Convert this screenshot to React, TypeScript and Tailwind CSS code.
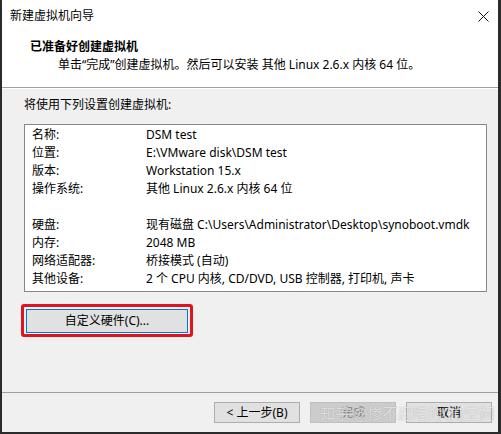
import React from "react";

const font = {
  fontFamily: '"Noto Sans", "Noto Sans CJK SC", sans-serif',
};

const rows: [string, string][] = [
  ["名称:", "DSM test"],
  ["位置:", "E:\\VMware disk\\DSM test"],
  ["版本:", "Workstation 15.x"],
  ["操作系统:", "其他 Linux 2.6.x 内核 64 位"],
  ["", ""],
  ["硬盘:", "现有磁盘 C:\\Users\\Administrator\\Desktop\\synoboot.vmdk"],
  ["内存:", "2048 MB"],
  ["网络适配器:", "桥接模式 (自动)"],
  ["其他设备:", "2 个 CPU 内核, CD/DVD, USB 控制器, 打印机, 声卡"],
];

function WinButton({ children, disabled }: { children: React.ReactNode; disabled?: boolean }) {
  return (
    <div
      className={
        "flex h-[21px] w-[86px] items-center justify-center border text-[12px] " +
        (disabled
          ? "border-[#bfbfbf] bg-[#cccccc] text-[#838383]"
          : "border-[#adadad] bg-[#e1e1e1] text-[#000]")
      }
    >
      {children}
    </div>
  );
}

export default function App() {
  return (
    <div
      className="relative flex h-[434px] w-[501px] flex-col border-b-[2px] border-l-[2px] border-r-[3px] border-[#2b2b2b] bg-[#f0f0f0] text-[12px] text-black"
      style={font}
    >
      {/* title bar + header */}
      <div className="flex flex-col bg-white">
        <div className="flex h-[32px] items-center justify-between pl-[8px] pr-[9px]">
          <span className="text-[12px] leading-none">新建虚拟机向导</span>
          <svg width="11" height="11" viewBox="0 0 11 11">
            <path d="M0.5 0.5L10.5 10.5M10.5 0.5L0.5 10.5" stroke="#111" strokeWidth="1" />
          </svg>
        </div>
        <div className="flex h-[55px] flex-col pl-[28px] pt-[6px]">
          <div className="h-[18px] text-[12px] font-bold leading-[18px]">已准备好创建虚拟机</div>
          <div className="h-[18px] pl-[28px] text-[12px] leading-[18px]">
            单击“完成”创建虚拟机。然后可以安装 其他 Linux 2.6.x 内核 64 位。
          </div>
        </div>
      </div>
      <div className="h-px bg-[#a0a0a0]" />
      <div className="h-px bg-white" />

      {/* body */}
      <div className="flex flex-1 flex-col px-[22px]">
        <div className="mt-[7px] h-[18px] leading-[18px]">将使用下列设置创建虚拟机:</div>
        <div className="mt-[10px] flex h-[168px] w-[463px] flex-col border border-[#828790] bg-white pl-[7px] pt-[1px]">
          {rows.map(([k, v], i) => (
            <div key={i} className="flex h-[18px] items-center leading-[18px]">
              <span className="w-[114px] shrink-0">{k}</span>
              <span className="whitespace-nowrap">{v}</span>
            </div>
          ))}
        </div>
        <div className="-ml-[3px] mt-[12px] flex h-[33px] w-[172px] items-center justify-center rounded-[3px] border-[3px] border-[#e0141e]">
          <div className="flex h-[24px] w-[162px] items-center justify-center border border-[#0078d7] bg-[#e1e1e1] text-[12px]">
            自定义硬件(C)...
          </div>
        </div>
      </div>

      {/* footer */}
      <div className="h-px bg-[#a0a0a0]" />
      <div className="flex h-[39px] items-start justify-end gap-[10px] pr-[6px] pt-[9px]">
        <WinButton>&lt; 上一步(B)</WinButton>
        <WinButton disabled>完成</WinButton>
        <WinButton>取消</WinButton>
      </div>

      {/* site watermark */}
      <div
        className="pointer-events-none absolute left-[318px] top-[403px] whitespace-nowrap text-[15px] leading-[20px] text-white/70"
        style={{
          textShadow: "0 0 1px rgba(0,0,0,0.3)",
          fontFamily: '"Noto Sans CJK SC", sans-serif',
        }}
      >
        知乎 @惨不忍睹的QQ空间
      </div>
    </div>
  );
}
